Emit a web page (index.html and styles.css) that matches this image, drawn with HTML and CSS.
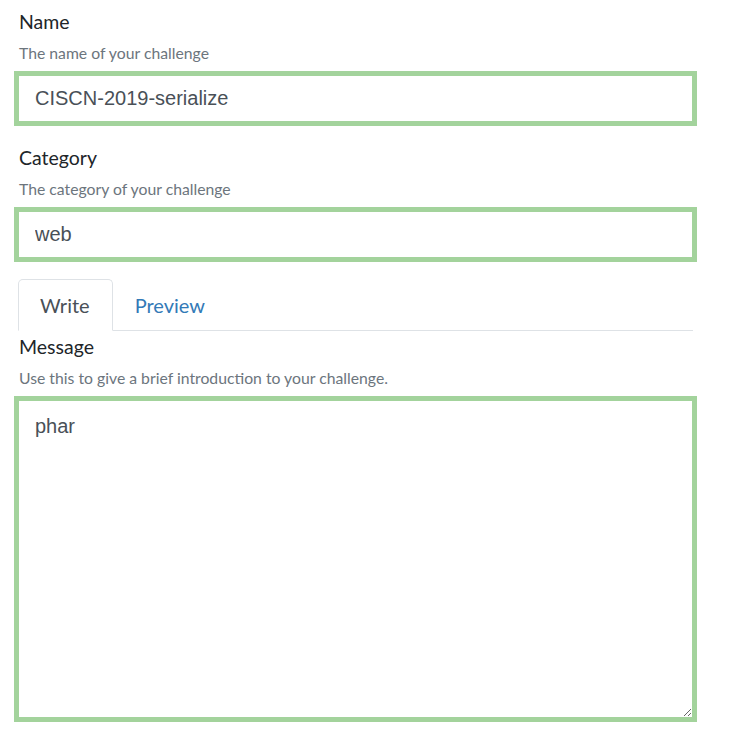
FILE: index.html
```html
<!DOCTYPE html>
<html>
<head>
<meta charset="utf-8">
<link rel="stylesheet" href="styles.css">
</head>
<body>
<form class="form">
  <div class="group">
    <label class="label">Name</label>
    <small class="help">The name of your challenge</small>
    <input class="field" type="text" value="CISCN-2019-serialize">
  </div>
  <div class="group">
    <label class="label">Category</label>
    <small class="help">The category of your challenge</small>
    <input class="field" type="text" value="web">
  </div>
  <ul class="tabs">
    <li class="tab active">Write</li>
    <li class="tab link">Preview</li>
  </ul>
  <div class="group msg">
    <label class="label">Message</label>
    <small class="help">Use this to give a brief introduction to your challenge.</small>
    <textarea class="field area">phar</textarea>
  </div>
</form>
</body>
</html>
```

FILE: styles.css
```css
html, body {
  margin: 0;
  padding: 0;
  background: #fff;
}
.form {
  padding: 8px 37px 0 14px;
  font-family: Lato, "Open Sans", sans-serif;
}
.group {
  display: flex;
  flex-direction: column;
  margin-bottom: 18px;
}
.label {
  font-size: 19.5px;
  line-height: 28px;
  color: #212529;
  padding-left: 5px;
}
.help {
  font-size: 15.75px;
  line-height: 22px;
  color: #6c757d;
  padding-left: 5px;
  margin-top: 6px;
  margin-bottom: 7px;
}
.field {
  box-sizing: border-box;
  width: 683px;
  height: 55px;
  margin: 0;
  border: 5px solid #a3d39c;
  border-radius: 0;
  padding: 0 16px;
  font-family: "Liberation Sans", Arial, sans-serif;
  font-size: 20px;
  color: #495057;
  background: #fff;
  outline: none;
}
.tabs {
  list-style: none;
  margin: -1px 4px 0 4px;
  padding: 0;
  display: flex;
  border-bottom: 1px solid #dee2e6;
}
.tab {
  font-size: 20px;
  line-height: 30px;
  padding: 10px 22px 10px 21px;
  margin-bottom: -1px;
  border: 1px solid transparent;
  border-radius: 5px 5px 0 0;
}
.tab.active {
  color: #495057;
  border-color: #dee2e6 #dee2e6 #fff;
  background: #fff;
}
.tab.link {
  color: #337ab7;
}
.msg {
  margin-top: 2px;
}
.area {
  height: 326px;
  padding: 10px 16px;
  line-height: 30px;
  resize: vertical;
}
```
